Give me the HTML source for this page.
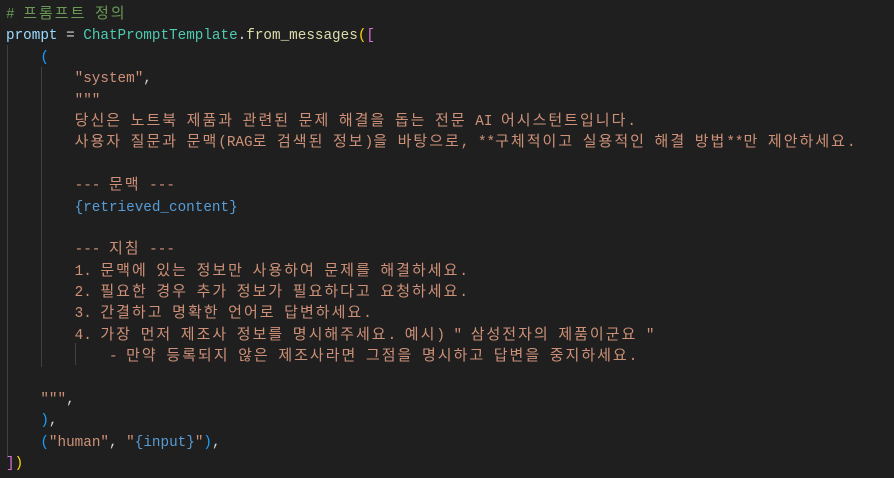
<!DOCTYPE html>
<html><head><meta charset="utf-8"><style>
body{margin:0;background:#1f1f1f;width:894px;height:478px;overflow:hidden;position:relative}
.c{position:absolute;left:6px;top:5px;font-family:"Liberation Mono","Noto Sans CJK KR",monospace;font-size:14.3px;color:#ce9178;white-space:pre}
.c div{height:21.4px;line-height:21.4px}
.c i{font-style:normal;font-family:"Noto Sans CJK KR","NanumGothic",sans-serif;font-size:15px;letter-spacing:2px;line-height:0}
.cm{color:#6a9955}.v{color:#9cdcfe}.w{color:#d4d4d4}.t{color:#4ec9b0}.f{color:#dcdcaa}
.y{color:#ffd700}.p{color:#da70d6}.b{color:#179fff}.bl{color:#569cd6}
.g{position:absolute;width:1px;background:#404040}
</style></head><body>
<div class="g" style="left:7px;top:45px;height:413px"></div>
<div class="g" style="left:41px;top:67px;height:300px"></div>
<div class="g" style="left:75px;top:343px;height:22px"></div>
<div class="c"><div><span class="cm"># <i>프롬프트</i> <i>정의</i></span></div><div><span class="v">prompt</span><span class="w"> = </span><span class="t">ChatPromptTemplate</span><span class="w">.</span><span class="f">from_messages</span><span class="y">(</span><span class="p">[</span></div><div>    <span class="b">(</span></div><div>        "system"<span class="w">,</span></div><div>        """</div><div>        <i>당신은</i> <i>노트북</i> <i>제품과</i> <i>관련된</i> <i>문제</i> <i>해결을</i> <i>돕는</i> <i>전문</i> AI <i>어시스턴트입니다</i>.</div><div>        <i>사용자</i> <i>질문과</i> <i>문맥</i>(RAG<i>로</i> <i>검색된</i> <i>정보</i>)<i>을</i> <i>바탕으로</i>, **<i>구체적이고</i> <i>실용적인</i> <i>해결</i> <i>방법</i>**<i>만</i> <i>제안하세요</i>.</div><div> </div><div>        --- <i>문맥</i> ---</div><div>        <span class="bl">{retrieved_content}</span></div><div> </div><div>        --- <i>지침</i> ---</div><div>        1. <i>문맥에</i> <i>있는</i> <i>정보만</i> <i>사용하여</i> <i>문제를</i> <i>해결하세요</i>.</div><div>        2. <i>필요한</i> <i>경우</i> <i>추가</i> <i>정보가</i> <i>필요하다고</i> <i>요청하세요</i>.</div><div>        3. <i>간결하고</i> <i>명확한</i> <i>언어로</i> <i>답변하세요</i>.</div><div>        4. <i>가장</i> <i>먼저</i> <i>제조사</i> <i>정보를</i> <i>명시해주세요</i>. <i>예시</i>) " <i>삼성전자의</i> <i>제품이군요</i> "</div><div>            - <i>만약</i> <i>등록되지</i> <i>않은</i> <i>제조사라면</i> <i>그점을</i> <i>명시하고</i> <i>답변을</i> <i>중지하세요</i>.</div><div> </div><div>    """<span class="w">,</span></div><div>    <span class="b">)</span><span class="w">,</span></div><div>    <span class="b">(</span>"human"<span class="w">, </span>"<span class="bl">{input}</span>"<span class="b">)</span><span class="w">,</span></div><div><span class="p">]</span><span class="y">)</span></div></div>
</body></html>
